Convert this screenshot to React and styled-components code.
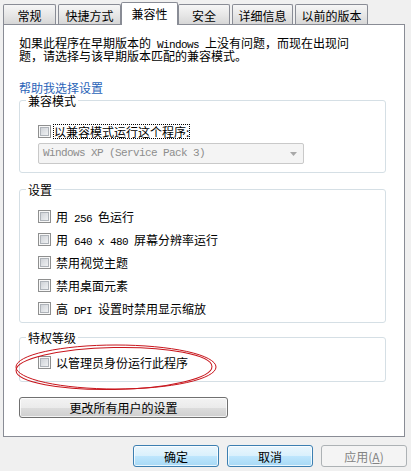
import React from 'react'
import styled, { createGlobalStyle, css } from 'styled-components'

const GlobalStyle = createGlobalStyle`
    html, body {
        margin: 0;
        padding: 0;
        background: #f0f0f0;
    }
    body {
        font-family: "Noto Sans CJK SC", "Liberation Sans", sans-serif;
        font-size: 12px;
        line-height: 13px;
        color: #000;
    }
    * { box-sizing: border-box; }
`

const Dialog = styled.div`
    position: relative;
    width: 411px;
    height: 471px;
    padding: 2px 0 0 3px;
    background: #f0f0f0;
`

const TabStrip = styled.div`
    display: flex;
    align-items: flex-end;
    gap: 2px;
    height: 22px;
    position: relative;
    z-index: 2;
`

const Tab = styled.div`
    width: ${props => props.$w}px;
    height: 20px;
    padding-top: 1px;
    display: flex;
    align-items: center;
    justify-content: center;
    border: 1px solid #898c95;
    border-bottom: none;
    border-radius: 2px 2px 0 0;
    background: linear-gradient(#f6f6f6, #e6e6e6 55%, #d7d7d7);
    white-space: nowrap;

    ${props => props.$active && css`
        width: ${props.$w + 4}px;
        height: 23px;
        margin: 0 -2px -1px;
        padding-top: 0;
        padding-bottom: 2px;
        background: #fff;
    `}
`

const Panel = styled.div`
    width: 402px;
    height: 413px;
    border: 1px solid #898c95;
    background: #fff;
    padding: 11px 0 0 15px;
`

const Intro = styled.p`
    margin: 0;
    white-space: nowrap;
`

/* half-width latin, mono like the dialog font */
const Lat = styled.span`
    font-family: "Liberation Mono", monospace;
    font-size: 11px;
    line-height: 8px;
    letter-spacing: -0.6px;
`

const HelpLink = styled.a`
    display: block;
    width: fit-content;
    height: 13px;
    margin-top: 19px;
    color: #2a64b8;
    text-decoration: none;
    cursor: pointer;
`

const Group = styled.fieldset`
    width: 367px;
    margin: ${props => props.$mt}px 0 0;
    padding: ${props => props.$pt}px 0 ${props => props.$pb}px 18px;
    border: 1px solid #d5dfe5;
    border-radius: 3px;
    min-width: 0;
`

const Legend = styled.legend`
    margin-left: -12px;
    padding: 0 2px;
    line-height: 13px;
`

const Rows = styled.div`
    display: flex;
    flex-direction: column;
    gap: 8px;
`

const Row = styled.label`
    display: flex;
    align-items: center;
    gap: 4px;
    height: 15px;
    white-space: nowrap;
`

const Check = styled.span`
    flex: none;
    width: 13px;
    height: 13px;
    border: 1px solid #8e8f8f;
    background: linear-gradient(135deg, #c6cad0, #eef0f2 80%, #f6f6f6);
    box-shadow: inset 0 0 0 1px #f8f8f8, inset 0 0 0 2px #aeb3b9;
`

const Caption = styled.span`
    padding: 1px 1px;
    margin-left: ${props => (props.$focus ? -2 : 0)}px;
    ${props => props.$focus && css`
        outline: 1px dotted #000;
        outline-offset: -1px;
    `}
`

const Combo = styled.div`
    margin-top: 4px;
    width: 266px;
    height: 21px;
    display: flex;
    align-items: center;
    justify-content: space-between;
    padding: 0 6px 0 4px;
    border: 1px solid #c9c9c9;
    border-radius: 2px;
    background: #f4f4f4;
    color: #8d8d8d;
`

const ComboText = styled(Lat)`
    line-height: 13px;
    white-space: pre;
`

const Button = styled.button`
    display: flex;
    align-items: center;
    justify-content: center;
    width: ${props => props.$w}px;
    height: ${props => props.$h || 22}px;
    padding: 0;
    font: inherit;
    color: #000;
    border: 1px solid #707070;
    border-radius: 3px;
    background: linear-gradient(#f3f3f3, #ebebeb 50%, #dddddd 50%, #cfcfcf);
    box-shadow: inset 0 0 0 1px rgba(255, 255, 255, 0.75);

    ${props => props.$blue && css`
        border-color: #3c7fb1;
        background: linear-gradient(#eaf6fd, #d9f0fc 50%, #bee6fd 50%, #a7d9f5);
    `}

    ${props => props.disabled && css`
        border-color: #adb2b5;
        background: #f4f4f4;
        color: #838383;
        box-shadow: none;
    `}
`

const AllUsers = styled(Button)`
    margin-top: 15px;
`

const Footer = styled.div`
    display: flex;
    justify-content: flex-end;
    gap: 8px;
    margin-top: 8px;
    padding-right: 4px;
`

const Mark = styled.svg`
    position: absolute;
    left: 13px;
    top: 341px;
    pointer-events: none;
`

const tabs = [
    { label: '常规', w: 53 },
    { label: '快捷方式', w: 63 },
    { label: '兼容性', w: 53, active: true },
    { label: '安全', w: 52 },
    { label: '详细信息', w: 61 },
    { label: '以前的版本', w: 73 },
]

const settings = [
    <>用<Lat> 256 </Lat>色运行</>,
    <>用<Lat> 640 x 480 </Lat>屏幕分辨率运行</>,
    <>禁用视觉主题</>,
    <>禁用桌面元素</>,
    <>高<Lat> DPI </Lat>设置时禁用显示缩放</>,
]

const CheckRow = ({ children, focus }) => (
    <Row>
        <Check />
        <Caption $focus={focus}>{children}</Caption>
    </Row>
)

const App = () => (
    <>
        <GlobalStyle />
        <Dialog>
            <TabStrip>
                {tabs.map(t => (
                    <Tab key={t.label} $w={t.w} $active={t.active}>{t.label}</Tab>
                ))}
            </TabStrip>
            <Panel>
                <Intro>
                    如果此程序在早期版本的<Lat> Windows </Lat>上没有问题，而现在出现问<br />
                    题，请选择与该早期版本匹配的兼容模式。
                </Intro>
                <HelpLink>帮助我选择设置</HelpLink>

                <Group $mt={0} $pt={17} $pb={8}>
                    <Legend>兼容模式</Legend>
                    <CheckRow focus>以兼容模式运行这个程序:</CheckRow>
                    <Combo>
                        <ComboText>Windows XP (Service Pack 3)</ComboText>
                        <svg width="7" height="4" viewBox="0 0 7 4">
                            <path d="M0 0h7L3.5 4z" fill="#a8a8a8" />
                        </svg>
                    </Combo>
                </Group>

                <Group $mt={10} $pt={13} $pb={6}>
                    <Legend>设置</Legend>
                    <Rows>
                        {settings.map((s, i) => (
                            <CheckRow key={i}>{s}</CheckRow>
                        ))}
                    </Rows>
                </Group>

                <Group $mt={8} $pt={11} $pb={11}>
                    <Legend>特权等级</Legend>
                    <CheckRow>以管理员身份运行此程序</CheckRow>
                </Group>

                <AllUsers $w={209} $h={21}>更改所有用户的设置</AllUsers>
            </Panel>
            <Footer>
                <Button $w={86} $blue>确定</Button>
                <Button $w={86} $blue>取消</Button>
                <Button $w={86} disabled>应用(<u>A</u>)</Button>
            </Footer>

            {/* hand-drawn red ring round the admin option */}
            <Mark width="206" height="52" viewBox="0 0 206 52">
                <ellipse cx="103" cy="26" rx="100" ry="22" fill="none" stroke="#c8161d" strokeWidth="1" />
                <ellipse cx="101" cy="27.5" rx="98" ry="21" fill="none" stroke="#c8161d" strokeWidth="1" transform="rotate(-1.2 101 27)" />
            </Mark>
        </Dialog>
    </>
)

export default App
